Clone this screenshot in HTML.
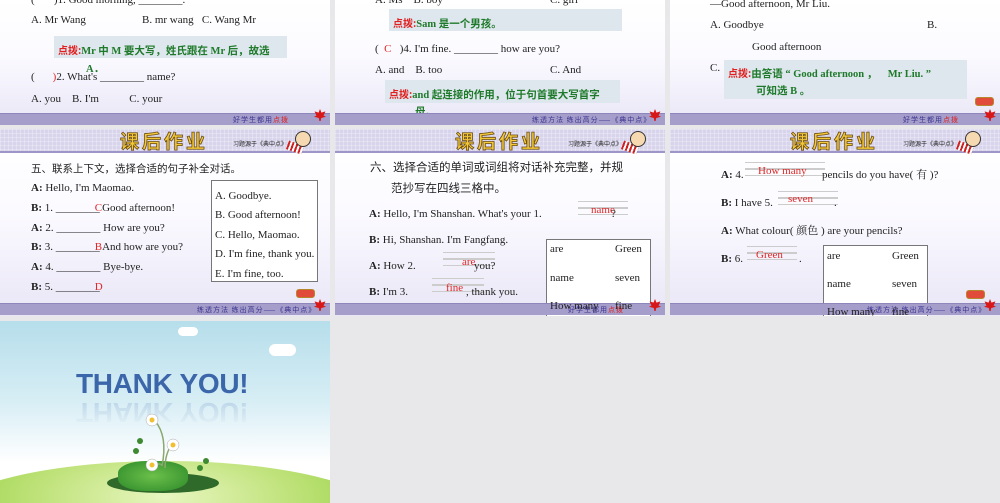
<!DOCTYPE html><html><head><meta charset="utf-8"><style>
*{margin:0;padding:0;box-sizing:border-box}
html{width:1000px;height:503px;overflow:hidden}
body{width:1000px;height:503px;background:#e8e8ea;position:relative;overflow:hidden;font-family:"Liberation Serif","Noto Serif CJK SC",serif;color:#222}
.s{position:absolute;width:330px;overflow:hidden;background:linear-gradient(#ffffff 0%,#fbfaff 45%,#e9e6f6 100%)}
.t{position:absolute;white-space:nowrap;font-size:11px;line-height:12px}
.r{color:#e02828}
.g{color:#1e7a2a;font-weight:bold;font-family:"Liberation Serif","Noto Sans CJK SC",serif;font-size:10.5px}
.hb{position:absolute;background:#dfe7ee}
.hr{color:#e02020;font-weight:bold;font-family:"Noto Sans CJK SC",sans-serif;font-size:10px}
.foot{position:absolute;left:0;width:330px;height:12px;background:#a59dca;border-top:1px solid #8e86bb}
.ft{position:absolute;top:1px;font-size:7px;color:#3b3590;font-family:"Noto Sans CJK SC",sans-serif;letter-spacing:1px;white-space:nowrap;line-height:10px}
.leaf{position:absolute;top:-5px;right:4px;width:12px;height:12px;background:#d81818;clip-path:polygon(50% 0,62% 30%,95% 20%,80% 55%,100% 65%,60% 75%,55% 100%,45% 100%,40% 75%,0 65%,20% 55%,5% 20%,38% 30%)}
.head{position:absolute;left:0;top:0;width:330px;height:24px;background-color:#d8d4ec;background-image:linear-gradient(#fff4 1px,transparent 1px),linear-gradient(90deg,#fff4 1px,transparent 1px);background-size:4px 4px;border-bottom:2px solid #9e96c8}
.ttl{position:absolute;left:120px;top:0;font-size:19px;line-height:24px;font-weight:bold;color:#f3c93a;-webkit-text-stroke:0.8px #6a4a10;font-family:"Noto Sans CJK SC",sans-serif;letter-spacing:3px}
.src{position:absolute;left:233px;top:10px;font-size:6px;color:#222;font-family:"Noto Sans CJK SC",sans-serif}
.kid{position:absolute;left:295px;top:2px;width:16px;height:16px;border-radius:50%;background:#f6d9b0;border:1px solid #333}
.kid2{position:absolute;left:287px;top:14px;width:16px;height:9px;background:repeating-linear-gradient(90deg,#c22 0 2px,#fff 2px 4px);transform:rotate(20deg)}
.btn{position:absolute;width:19px;height:9px;border-radius:3px;background:#e04b3a;border:1px solid #b8862a}
.box{position:absolute;border:1px solid #777;background:#fff}
.ln{position:absolute;border-top:1px solid #ccc;border-bottom:1px solid #ccc;height:7px}
</style></head><body>

<div class="s" style="left:0;top:0;height:125px">
<div class="t" style="left:31px;top:-6px">( &nbsp;&nbsp;&nbsp;&nbsp;&nbsp;&nbsp;)1. Good morning, ________.</div>
<div class="t" style="left:31px;top:14px">A. Mr Wang</div>
<div class="t" style="left:142px;top:14px">B. mr wang &nbsp;&nbsp;C. Wang Mr</div>
<div class="hb" style="left:54px;top:36px;width:233px;height:22px"></div>
<div class="t" style="left:58px;top:44px"><span class="hr">点拨:</span><span class="g">Mr 中 M 要大写，姓氏跟在 Mr 后，故选</span></div>
<div class="t g" style="left:86px;top:64px">A．</div>
<div class="t" style="left:31px;top:71px">( &nbsp;&nbsp;&nbsp;&nbsp;&nbsp;&nbsp;&nbsp;<span class="r" style="margin-left:-4px">)</span>2. What's ________ name?</div>
<div class="t" style="left:31px;top:93px">A. you &nbsp;&nbsp;&nbsp;B. I'm &nbsp;&nbsp;&nbsp;&nbsp;&nbsp;&nbsp;&nbsp;&nbsp;&nbsp;&nbsp;C. your</div>
<div class="foot" style="top:113px"><div class="ft" style="left:233px">好学生都用<span style="color:#d22">点拨</span></div><div class="leaf"></div></div>
</div>

<div class="s" style="left:335px;top:0;height:125px">
<div class="t" style="left:40px;top:-6px">A. Ms &nbsp;&nbsp;&nbsp;B. boy</div>
<div class="t" style="left:215px;top:-6px">C. girl</div>
<div class="hb" style="left:54px;top:9px;width:233px;height:22px"></div>
<div class="t" style="left:58px;top:17px"><span class="hr">点拨:</span><span class="g">Sam 是一个男孩。</span></div>
<div class="t" style="left:40px;top:43px">( &nbsp;<span class="r">C</span> &nbsp;&nbsp;)4. I'm fine. ________ how are you?</div>
<div class="t" style="left:40px;top:64px">A. and &nbsp;&nbsp;&nbsp;B. too</div>
<div class="t" style="left:215px;top:64px">C. And</div>
<div class="hb" style="left:50px;top:80px;width:235px;height:23px"></div>
<div class="t" style="left:54px;top:88px"><span class="hr">点拨:</span><span class="g">and 起连接的作用，位于句首要大写首字</span></div>
<div class="t g" style="left:80px;top:107px">母。</div>
<div class="foot" style="top:113px"><div class="ft" style="left:197px">练透方法 练出高分——《典中点》</div><div class="leaf"></div></div>
</div>

<div class="s" style="left:670px;top:0;height:125px">
<div class="t" style="left:40px;top:-2px">—Good afternoon, Mr Liu.</div>
<div class="t" style="left:40px;top:19px">A. Goodbye</div>
<div class="t" style="left:257px;top:19px">B.</div>
<div class="t" style="left:82px;top:41px">Good afternoon</div>
<div class="t" style="left:40px;top:62px">C.</div>
<div class="hb" style="left:54px;top:60px;width:243px;height:39px"></div>
<div class="t" style="left:58px;top:67px"><span class="hr">点拨:</span><span class="g">由答语 “ Good afternoon ， &nbsp;&nbsp;&nbsp;Mr Liu. ”</span></div>
<div class="t g" style="left:86px;top:86px">可知选 B 。</div>
<div class="btn" style="left:305px;top:97px"></div>
<div class="foot" style="top:113px"><div class="ft" style="left:233px">好学生都用<span style="color:#d22">点拨</span></div><div class="leaf"></div></div>
</div>

<div class="s" style="left:0;top:129px;height:187px">
<div class="head"><div class="ttl">课后作业</div><div class="src">习题源于《典中点》</div><div class="kid2"></div><div class="kid"></div></div>
<div class="t" style="left:31px;top:34px;font-size:10.5px;font-family:'Noto Sans CJK SC',sans-serif">五、联系上下文，选择合适的句子补全对话。</div>
<div class="t" style="left:31px;top:53px"><b>A:</b> Hello, I'm Maomao.</div>
<div class="t" style="left:31px;top:73px"><b>B:</b> 1. ________<span class="r" style="margin-left:-5px">C</span>Good afternoon!</div>
<div class="t" style="left:31px;top:93px"><b>A:</b> 2. ________ How are you?</div>
<div class="t" style="left:31px;top:112px"><b>B:</b> 3. ________<span class="r" style="margin-left:-5px">B</span>And how are you?</div>
<div class="t" style="left:31px;top:132px"><b>A:</b> 4. ________ Bye-bye.</div>
<div class="t" style="left:31px;top:152px"><b>B:</b> 5. ________<span class="r" style="margin-left:-5px">D</span></div>
<div class="box" style="left:211px;top:51px;width:107px;height:102px"></div>
<div class="t" style="left:215px;top:61px">A. Goodbye.</div>
<div class="t" style="left:215px;top:80px">B. Good afternoon!</div>
<div class="t" style="left:215px;top:100px">C. Hello, Maomao.</div>
<div class="t" style="left:215px;top:119px">D. I'm fine, thank you.</div>
<div class="t" style="left:215px;top:139px">E. I'm fine, too.</div>
<div class="btn" style="left:296px;top:160px"></div>
<div class="foot" style="top:174px"><div class="ft" style="left:197px">练透方法 练出高分——《典中点》</div><div class="leaf"></div></div>
</div>

<div class="s" style="left:335px;top:129px;height:187px">
<div class="head"><div class="ttl">课后作业</div><div class="src">习题源于《典中点》</div><div class="kid2"></div><div class="kid"></div></div>
<div class="t" style="left:35px;top:32px;font-size:11.5px;font-family:'Noto Sans CJK SC',sans-serif">六、选择合适的单词或词组将对话补充完整，并规</div>
<div class="t" style="left:56px;top:53px;font-size:11.5px;font-family:'Noto Sans CJK SC',sans-serif">范抄写在四线三格中。</div>
<div class="t" style="left:34px;top:79px"><b>A:</b> Hello, I'm Shanshan. What's your 1.</div>
<div class="ln" style="left:243px;top:72px;width:50px"></div><div class="ln" style="left:243px;top:79px;width:50px"></div>
<div class="t r" style="left:256px;top:75px">name</div><div class="t" style="left:276px;top:79px">?</div>
<div class="t" style="left:34px;top:105px"><b>B:</b> Hi, Shanshan. I'm Fangfang.</div>
<div class="ln" style="left:108px;top:123px;width:52px"></div><div class="ln" style="left:108px;top:130px;width:52px"></div>
<div class="t" style="left:34px;top:131px"><b>A:</b> How 2.</div>
<div class="t r" style="left:127px;top:127px">are</div><div class="t" style="left:139px;top:131px">you?</div>
<div class="ln" style="left:97px;top:149px;width:52px"></div><div class="ln" style="left:97px;top:156px;width:52px"></div>
<div class="t" style="left:34px;top:157px"><b>B:</b> I'm 3.</div>
<div class="t r" style="left:111px;top:153px">fine</div><div class="t" style="left:131px;top:157px">, thank you.</div>
<div class="box" style="left:211px;top:110px;width:105px;height:80px"></div>
<div class="t" style="left:215px;top:114px">are</div><div class="t" style="left:280px;top:114px">Green</div>
<div class="t" style="left:215px;top:143px">name</div><div class="t" style="left:280px;top:143px">seven</div>
<div class="foot" style="top:174px"><div class="ft" style="left:233px">好学生都用<span style="color:#d22">点拨</span></div><div class="leaf"></div></div>
<div class="t" style="left:215px;top:171px">How many</div><div class="t" style="left:280px;top:171px">fine</div>
</div>

<div class="s" style="left:670px;top:129px;height:187px">
<div class="head"><div class="ttl">课后作业</div><div class="src">习题源于《典中点》</div><div class="kid2"></div><div class="kid"></div></div>
<div class="ln" style="left:75px;top:33px;width:80px"></div><div class="ln" style="left:75px;top:40px;width:80px"></div>
<div class="t" style="left:51px;top:40px"><b>A:</b> 4.</div>
<div class="t r" style="left:88px;top:36px">How many</div>
<div class="t" style="left:152px;top:40px">pencils do you have( 有 )?</div>
<div class="ln" style="left:108px;top:62px;width:60px"></div><div class="ln" style="left:108px;top:69px;width:60px"></div>
<div class="t" style="left:51px;top:68px"><b>B:</b> I have 5.</div>
<div class="t r" style="left:118px;top:64px">seven</div><div class="t" style="left:164px;top:68px">.</div>
<div class="t" style="left:51px;top:96px"><b>A:</b> What colour( 颜色 ) are your pencils?</div>
<div class="ln" style="left:77px;top:117px;width:50px"></div><div class="ln" style="left:77px;top:124px;width:50px"></div>
<div class="t" style="left:51px;top:124px"><b>B:</b> 6.</div>
<div class="t r" style="left:86px;top:120px">Green</div><div class="t" style="left:129px;top:124px">.</div>
<div class="box" style="left:153px;top:116px;width:105px;height:80px"></div>
<div class="t" style="left:157px;top:121px">are</div><div class="t" style="left:222px;top:121px">Green</div>
<div class="t" style="left:157px;top:149px">name</div><div class="t" style="left:222px;top:149px">seven</div>
<div class="btn" style="left:296px;top:161px"></div>
<div class="foot" style="top:174px"><div class="ft" style="left:197px">练透方法 练出高分——《典中点》</div><div class="leaf"></div></div>
<div class="t" style="left:157px;top:177px">How many</div><div class="t" style="left:222px;top:177px">fine</div>
</div>

<div style="position:absolute;left:0;top:321px;width:330px;height:182px;overflow:hidden;background:linear-gradient(#b6deeb 0%,#d8eef5 45%,#f6fbfd 70%,#ffffff 78%)">
<div style="position:absolute;left:-60px;top:140px;width:450px;height:120px;border-radius:50%;background:radial-gradient(ellipse at 50% 30%,#e8f6c0 0%,#bfe27a 40%,#8fcf3a 80%)"></div>
<div style="position:absolute;left:178px;top:6px;width:20px;height:9px;border-radius:6px;background:#fff"></div>
<div style="position:absolute;left:269px;top:23px;width:27px;height:12px;border-radius:7px;background:#fff"></div>
<div style="position:absolute;left:76px;top:48px;font:bold 28px/30px 'Liberation Sans',sans-serif;color:#3c66aa;letter-spacing:-0.3px">THANK YOU!</div>
<div style="position:absolute;left:76px;top:76px;font:bold 28px/30px 'Liberation Sans',sans-serif;color:#3c66aa;opacity:.2;transform:scaleY(-1);letter-spacing:-0.3px;-webkit-mask-image:linear-gradient(transparent,#000)">THANK YOU!</div>
<div style="position:absolute;left:107px;top:152px;width:112px;height:20px;border-radius:50%;background:#2f6a2a"></div>
<div style="position:absolute;left:118px;top:140px;width:70px;height:30px;border-radius:40%;background:radial-gradient(#6cc04a,#2d8a2a)"></div>
<svg style="position:absolute;left:120px;top:85px" width="100" height="70"><path d="M35 15 Q48 30 42 60 M52 38 Q45 48 45 62 M30 62 Q40 55 42 60" stroke="#8aa870" stroke-width="1.5" fill="none"/>
<circle cx="32" cy="14" r="6" fill="#fff" stroke="#aaa" stroke-width=".5"/><circle cx="32" cy="14" r="2.5" fill="#f0c030"/>
<circle cx="53" cy="39" r="6" fill="#fff" stroke="#aaa" stroke-width=".5"/><circle cx="53" cy="39" r="2.5" fill="#f0c030"/>
<circle cx="32" cy="59" r="6" fill="#fff" stroke="#aaa" stroke-width=".5"/><circle cx="32" cy="59" r="2.5" fill="#f0c030"/>
<circle cx="20" cy="35" r="3" fill="#3d8a30"/><circle cx="16" cy="45" r="3" fill="#3d8a30"/><circle cx="86" cy="55" r="3" fill="#3d8a30"/><circle cx="80" cy="62" r="3" fill="#3d8a30"/></svg>
</div>
</body></html>
